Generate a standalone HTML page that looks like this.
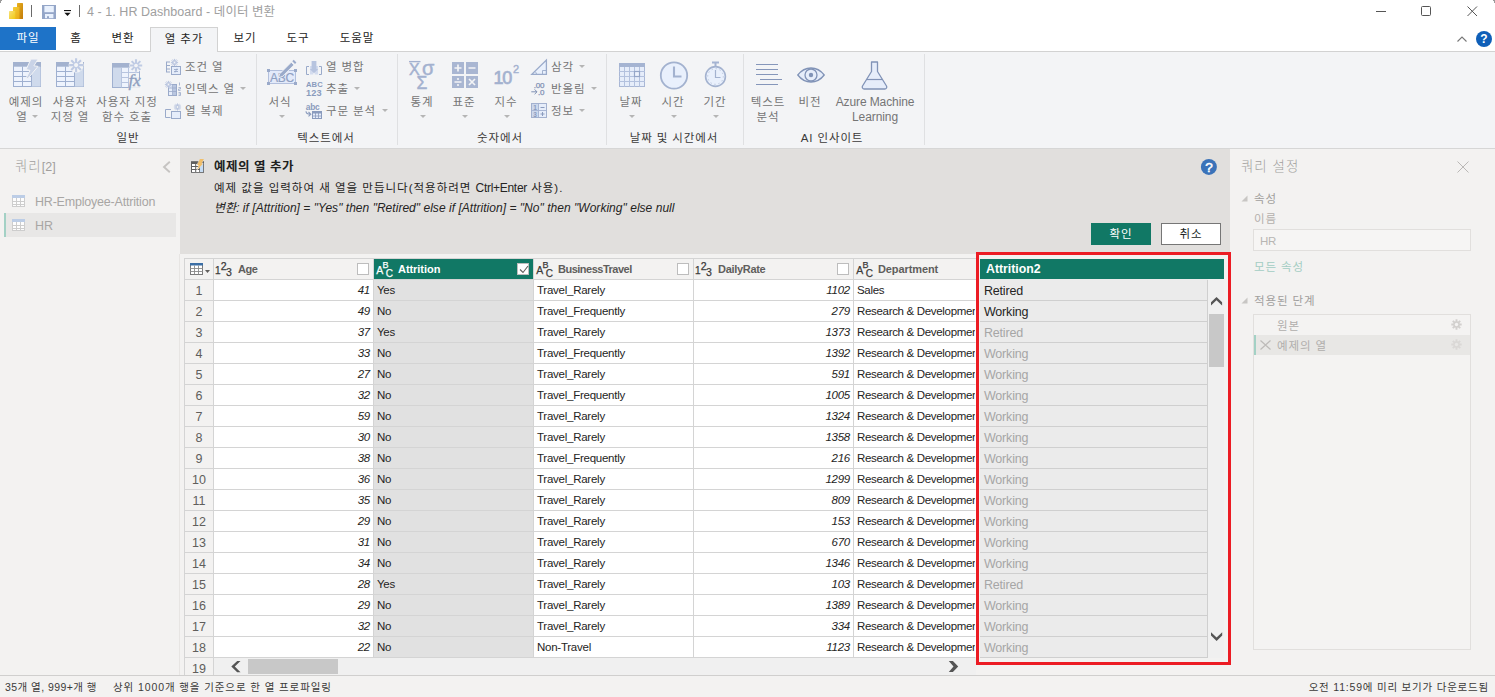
<!DOCTYPE html>
<html lang="ko"><head><meta charset="utf-8"><title>4 - 1. HR Dashboard - 데이터 변환</title>
<style>
*{box-sizing:border-box;margin:0;padding:0}
html,body{width:1495px;height:697px;overflow:hidden;background:#fff}
body{position:relative;font-family:"Liberation Sans","Noto Sans CJK KR",sans-serif;font-size:12px;color:#252423}
.a{position:absolute}
.t{position:absolute;white-space:nowrap;line-height:16px;height:16px}
.k{font-family:"Liberation Sans","Noto Sans CJK KR",sans-serif}
svg{position:absolute;overflow:visible}
/* title */
#title{left:0;top:0;width:1495px;height:27px;background:#fff}
#tabs{left:0;top:27px;width:1495px;height:25px;background:#fff;border-bottom:1px solid #d2d2d2}
.tab{position:absolute;top:0;height:24px;line-height:23px;font-size:11.5px;letter-spacing:.9px;color:#252423;text-align:center;white-space:nowrap}
#filetab{left:0;width:56px;height:23px;background:#1e73c8;color:#fff}
#acttab{left:150px;width:68px;height:25px;background:#f3f4f6;border:1px solid #d2d2d2;border-bottom:none}
#ribbon{left:0;top:52px;width:1495px;height:97px;background:#f3f4f6;border-bottom:1px solid #d6d6d6}
.sep{position:absolute;top:2px;width:1px;height:91px;background:#dfe0e2}
.rl{position:absolute;white-space:nowrap;line-height:15px;font-size:11.5px;letter-spacing:.9px;color:#757575;text-align:center}
.gl{position:absolute;white-space:nowrap;line-height:15px;font-size:11.5px;letter-spacing:.9px;color:#3b3a39;text-align:center;top:79px}
.dd{position:absolute;width:0;height:0;border-left:3px solid transparent;border-right:3px solid transparent;border-top:3px solid #b5b5b5}
/* panels */
#left{left:0;top:149px;width:180px;height:527px;background:#f3f2f1}
#center{left:180px;top:149px;width:1050px;height:105px;background:#e1dfdd}
#gridbg{left:180px;top:254px;width:1050px;height:422px;background:#f3f2f1}
#right{left:1230px;top:149px;width:265px;height:527px;background:#f3f2f1}
#status{left:0;top:675px;width:1495px;height:22px;background:#f3f2f1;border-top:1px solid #d0cfce}
/* grid */
.gr{position:absolute;left:0;height:21px;width:1495px}
.c{position:absolute;top:0;height:21px;line-height:20px;font-size:11.5px;letter-spacing:-.25px;white-space:nowrap;overflow:hidden;border-right:1px solid #d4d4d4;border-bottom:1px solid #d4d4d4;background:#fff;color:#252423;padding:0 3px}
.c.rn{left:184px;width:30px;border-left:1px solid #d4d4d4;background:#f3f2f1;text-align:center;color:#605e5c;font-size:12.5px;letter-spacing:0;padding:0;line-height:22px}
.c.c1{left:214px;width:160px}
.c.c2{left:374px;width:160px}
.c.c3{left:534px;width:160px}
.c.c4{left:694px;width:160px}
.c.c5{left:854px;width:122px;border-right:1px solid #fff;padding-right:0;letter-spacing:-.32px}
.c.c6{left:980px;width:228px;background:#ebebeb;border-right:1px solid #cfcfcf;border-bottom:1px solid #cfcfcf;font-size:12.5px;letter-spacing:-.2px;padding-left:4px;line-height:22px}
.c.sel{background:#e1e1e1}
.c.num{text-align:right;font-style:italic}
.c.dim{color:#a6a6a6}
.h{position:absolute;top:258px;height:22px;background:#f3f2f1;border:1px solid #d4d4d4;border-left:none;font-size:11px;letter-spacing:-.3px;font-weight:bold;color:#605e5c;line-height:20px;white-space:nowrap}
.cb{position:absolute;top:4px;width:12px;height:12px;background:#fff;border:1px solid #bdbdbd}
.h.hs{background:#117865;color:#fff}
.ty{position:absolute;left:3px;top:0;font-size:12px;font-weight:normal;letter-spacing:-1.6px;color:#3b3a39}
.hs .ty{color:#fff}
.ty sup{font-size:9.5px;position:relative;top:-1px;vertical-align:super;line-height:0}
.ty sub{font-size:9.5px;position:relative;top:1px;vertical-align:sub;line-height:0}
.hn{position:absolute;top:0}
.h svg{position:absolute}
.ti{left:0;top:0;fill:#3b3a39;stroke:#3b3a39;font-weight:normal;letter-spacing:0}
.hs .ti{fill:#fff;stroke:#fff}

</style></head><body>
<div id="title" class="a">
  <div class="a" style="left:0;top:0;width:1px;height:3px;background:#9a9a9a"></div><div class="a" style="left:0;top:0;width:2px;height:1px;background:#9a9a9a"></div>
  <div class="a" style="right:0;top:0;width:1px;height:3px;background:#9a9a9a"></div><div class="a" style="right:0;top:0;width:2px;height:1px;background:#9a9a9a"></div>
  <svg style="left:8px;top:2px" width="16" height="18" viewBox="0 0 16 18">
    <defs>
      <linearGradient id="pb1" x1="0" y1="0" x2="1" y2="1"><stop offset="0" stop-color="#f7e17a"/><stop offset="1" stop-color="#f2c811"/></linearGradient>
      <linearGradient id="pb2" x1="0" y1="0" x2="1" y2="1"><stop offset="0" stop-color="#f5cf3a"/><stop offset="1" stop-color="#e8a914"/></linearGradient>
      <linearGradient id="pb3" x1="0" y1="0" x2="1" y2="1"><stop offset="0" stop-color="#eab320"/><stop offset="1" stop-color="#c27a08"/></linearGradient>
    </defs>
    <rect x="9" y="1" width="6" height="16" rx=".6" fill="url(#pb3)"/>
    <rect x="5" y="5" width="6.4" height="12" rx=".6" fill="url(#pb2)"/>
    <rect x="1" y="9" width="6.2" height="8" rx=".6" fill="url(#pb1)"/>
  </svg>
  <div class="a" style="left:31px;top:5px;width:1px;height:12px;background:#6a6a6a"></div>
  <svg style="left:42px;top:5px" width="14" height="14" viewBox="0 0 14 14">
    <rect x="0" y="0" width="14" height="14" fill="#94a6c8"/>
    <rect x="2.4" y="1" width="9.4" height="6.2" fill="#e9f1fd"/>
    <rect x="3" y="9" width="8.4" height="4.2" fill="#e9f1fd"/>
    <rect x="5" y="11.2" width="2" height="2" fill="#94a6c8"/>
  </svg>
  <svg style="left:63px;top:9px" width="9" height="8" viewBox="0 0 9 8">
    <rect x="1" y="1" width="7" height="1.1" fill="#111"/>
    <path d="M1.4 3.8h6.2L4.5 7z" fill="#111"/>
  </svg>
  <div class="a" style="left:79px;top:5px;width:1px;height:12px;background:#6a6a6a"></div>
  <div class="t" id="ttl" style="left:87px;top:4px;font-size:12.5px;letter-spacing:.05px;color:#a0a0a0">4 - 1. HR Dashboard - 데이터 변환</div>
  <!-- window controls -->
  <svg style="left:1370px;top:0" width="125" height="27" viewBox="0 0 125 27">
    <path d="M6 11.5h10" stroke="#555" stroke-width="1" fill="none"/>
    <rect x="51.5" y="6.5" width="9" height="9" rx="1" stroke="#555" stroke-width="1" fill="none"/>
    <path d="M97.5 6.5l9.5 9.5M107 6.5l-9.5 9.5" stroke="#555" stroke-width="1" fill="none"/>
  </svg>
</div>
<div id="tabs" class="a">
  <div class="tab" id="filetab">파일</div>
  <div class="tab" style="left:56px;width:40px">홈</div>
  <div class="tab" style="left:100px;width:46px">변환</div>
  <div class="tab" id="acttab">열 추가</div>
  <div class="tab" style="left:222px;width:46px">보기</div>
  <div class="tab" style="left:275px;width:46px">도구</div>
  <div class="tab" style="left:332px;width:50px">도움말</div>
  <svg style="left:1456px;top:8px" width="12" height="8" viewBox="0 0 12 8"><path d="M1.5 6.5L6 2l4.5 4.5" stroke="#777" stroke-width="1.1" fill="none"/></svg>
  <svg style="left:1476px;top:4px" width="16" height="16" viewBox="0 0 16 16"><circle cx="8" cy="8" r="8" fill="#0f5fb8"/><text x="8" y="12.3" font-family="Liberation Sans,sans-serif" font-weight="bold" font-size="12" fill="#fff" text-anchor="middle">?</text></svg>
</div>
<div id="ribbon" class="a">
<!-- separators -->
<div class="sep" style="left:256px"></div><div class="sep" style="left:397px"></div><div class="sep" style="left:606px"></div><div class="sep" style="left:743px"></div><div class="sep" style="left:924px"></div>
<!-- group 1 -->
<svg style="left:13px;top:10px" width="28" height="25" viewBox="0 0 28 25">
  <rect x=".5" y=".5" width="27" height="24" fill="#eef3fd" stroke="#9fb0d0"/>
  <rect x="18.500" y="4.500" width="9" height="20" fill="#cfdaec"/>
  <rect x="0" y="0" width="28" height="4.700" fill="#a3b2cf"/>
  <path d="M9.500 4.500v20M18.500 4.500v20M.5 9.500h18M.5 14.500h18M.5 19.500h18" stroke="#9fb0d0" fill="none"/>
  <path d="M17.900-2.900h7.200l-4.200 6.700 4.100.600L14.900 16.600l-1.700-.700 3.800-7.500-3.800-.900z" fill="#c9d3e7" stroke="#f3f4f6" stroke-width="1" stroke-linejoin="round"/>
</svg>
<svg style="left:56px;top:10px" width="28" height="25" viewBox="0 0 28 25">
  <rect x=".5" y=".5" width="27" height="24" fill="#eef3fd" stroke="#9fb0d0"/>
  <rect x="18.500" y="4.500" width="9" height="20" fill="#cfdaec"/>
  <rect x="0" y="0" width="28" height="4.700" fill="#a3b2cf"/>
  <path d="M9.500 4.500v20M18.500 4.500v20M.5 9.500h18M.5 14.500h18M.5 19.500h18" stroke="#9fb0d0" fill="none"/>
  <g transform="translate(20.1,3.1)"><circle r="7.5" fill="#f3f4f6"/><path d="M-6.90 -0.00L6.90 0.00M-4.88 -4.88L4.88 4.88M-0.00 -6.90L0.00 6.90M4.88 -4.88L-4.88 4.88" stroke="#bfcbe4" stroke-width="2.1" fill="none"/><circle r="2.07" fill="#f3f4f6"/></g>
</svg>
<svg style="left:112px;top:11px" width="30" height="27" viewBox="0 0 30 27">
  <rect x=".5" y=".5" width="27" height="24" fill="#eef3fd" stroke="#9fb0d0"/>
  <rect x="1" y="4.500" width="8.500" height="19.500" fill="#cfdaec"/>
  <rect x="0" y="0" width="28" height="4.700" fill="#a3b2cf"/>
  <path d="M9.500 4.500v20M16.500 4.500v20M23.500 4.500v20M9.500 9.500h18M9.500 14.500h18M9.500 19.500h18" stroke="#b7c4df" fill="none"/>
  <rect x="17" y="10" width="13" height="17" fill="#f3f4f6" opacity=".85"/>
  <path d="M27.500 9v6" stroke="#9fb0d0"/>
  <g transform="translate(24.0,2.5)"><circle r="6.8" fill="#f3f4f6"/><path d="M-6.20 -0.00L6.20 0.00M-4.38 -4.38L4.38 4.38M-0.00 -6.20L0.00 6.20M4.38 -4.38L-4.38 4.38" stroke="#bfcbe4" stroke-width="2.1" fill="none"/><circle r="1.86" fill="#f3f4f6"/></g>
  <text x="16.500" y="23.300" font-family="Liberation Serif,serif" font-style="italic" font-size="17.500" fill="#8e9fc0" stroke="#8e9fc0" stroke-width=".35" letter-spacing="-.3">fx</text>
</svg>
<div class="rl" style="left:0;width:52px;top:43px">예제의</div>
<div class="rl" style="left:0;width:44px;top:58px">열</div><div class="dd" style="left:31.5px;top:63px"></div>
<div class="rl" style="left:44px;width:52px;top:43px">사용자</div>
<div class="rl" style="left:44px;width:52px;top:58px">지정 열</div>
<div class="rl" style="left:92px;width:70px;top:43px">사용자 지정</div>
<div class="rl" style="left:92px;width:70px;top:58px">함수 호출</div>
<!-- small: 조건 열 -->
<svg style="left:166px;top:7px" width="16" height="16" viewBox="0 0 16 16">
  <path d="M.5 2.5v11M1 3h3M1 6.5h3M1 10h3M1 13h3" stroke="#9aaaca" fill="none"/>
  <rect x="5.5" y="7.5" width="9" height="8" fill="#e6edfa" stroke="#9aaaca"/>
  <path d="M8 10.5h4M8 12.5h4M11 9.5l-2 4" stroke="#9aaaca" stroke-width=".9" fill="none"/>
  <g transform="translate(8.5,3.5)"><path d="M-3.60 -0.00L3.60 0.00M-3.12 -1.80L3.12 1.80M-1.80 -3.12L1.80 3.12M-0.00 -3.60L0.00 3.60M1.80 -3.12L-1.80 3.12M3.12 -1.80L-3.12 1.80" stroke="#b5c2de" stroke-width="0.9" fill="none"/><circle r="0.90" fill="#f3f4f6"/></g>
</svg>
<div class="rl" style="left:185px;top:8px">조건 열</div>
<!-- 인덱스 열 -->
<svg style="left:165px;top:29px" width="17" height="16" viewBox="0 0 17 16">
  <rect x="3.5" y="3.5" width="8" height="11" fill="#e6edfa" stroke="#9aaaca"/>
  <rect x="8" y="4" width="3" height="10" fill="#b9c6e0"/>
  <path d="M3.5 7h8M3.5 10.5h8M7.5 4v10" stroke="#9aaaca" stroke-width=".8" fill="none"/>
  <g transform="translate(3.5,3.5)"><path d="M-3.60 -0.00L3.60 0.00M-3.12 -1.80L3.12 1.80M-1.80 -3.12L1.80 3.12M-0.00 -3.60L0.00 3.60M1.80 -3.12L-1.80 3.12M3.12 -1.80L-3.12 1.80" stroke="#b5c2de" stroke-width="0.9" fill="none"/><circle r="0.90" fill="#f3f4f6"/></g>
  <path d="M14.5 1.5v3M13.5 6.5h2v1.5h-2v1.5h2M13.5 11.5h2v3h-2M13.5 13h2" stroke="#9aaaca" stroke-width=".8" fill="none"/>
</svg>
<div class="rl" style="left:185px;top:30px">인덱스 열</div><div class="dd" style="left:240px;top:35px"></div>
<!-- 열 복제 -->
<svg style="left:165px;top:51px" width="17" height="16" viewBox="0 0 17 16">
  <path d="M6 6.5H.5v8h5" stroke="#9aaaca" fill="none"/>
  <rect x="6.5" y="8.500" width="9" height="7" fill="#e6edfa" stroke="#9aaaca"/>
  <g transform="translate(12.5,4.0)"><path d="M-3.60 -0.00L3.60 0.00M-3.12 -1.80L3.12 1.80M-1.80 -3.12L1.80 3.12M-0.00 -3.60L0.00 3.60M1.80 -3.12L-1.80 3.12M3.12 -1.80L-3.12 1.80" stroke="#b5c2de" stroke-width="0.9" fill="none"/><circle r="0.90" fill="#f3f4f6"/></g>
</svg>
<div class="rl" style="left:185px;top:52px">열 복제</div>
<div class="gl" style="left:98px;width:60px">일반</div>
<!-- group 2 -->
<svg style="left:265px;top:7px" width="33" height="27" viewBox="0 0 33 27">
  <rect x="3.500" y="11.500" width="27" height="13" fill="#e3eafa" stroke="#b3c0dd"/>
  <g fill="#9aaaca"><rect x="2" y="10" width="3" height="3"/><rect x="29" y="10" width="3" height="3"/><rect x="2" y="23" width="3" height="3"/><rect x="29" y="23" width="3" height="3"/></g>
  <text x="17" y="22.500" font-family="Liberation Sans,sans-serif" font-size="12" fill="#8fa0c2" stroke="#8fa0c2" stroke-width=".2" text-anchor="middle" letter-spacing="-.2">ABC</text>
  <path d="M26.300 3.200l2.700 2.700L17.300 17.600l-3.900 1.200 1.200-3.900z" fill="#9aaaca" stroke="#f3f4f6" stroke-width=".9"/>
  <path d="M27.300 2.200l1.400-1.400 2.700 2.700-1.400 1.400z" fill="#9aaaca"/>
</svg>
<div class="rl" style="left:255px;width:50px;top:43px">서식</div><div class="dd" style="left:278.5px;top:63px"></div>
<svg style="left:306px;top:8px" width="16" height="16" viewBox="0 0 16 16">
  <rect x="4" y="6" width="3.300" height="8.500" fill="#d3dcef"/><rect x="8.700" y="6" width="3.300" height="8.500" fill="#d3dcef"/>
  <path d="M3 6.500H.5v8H3M13 6.500h2.500v8H13" stroke="#9aaaca" fill="none"/>
  <path d="M5.600 1h4.800v8h1.800L8 13.200 3.800 9h1.800z" fill="#b7c4df"/>
</svg>
<div class="rl" style="left:326px;top:8px">열 병합</div>
<svg style="left:305px;top:26px" width="18" height="18" viewBox="0 0 18 18">
  <g font-family="Liberation Sans,sans-serif" font-weight="bold" fill="#8a9bbd">
  <text x="1" y="8.700" font-size="7.600" letter-spacing=".1">ABC</text>
  <text x="1" y="17.700" font-size="9.200" letter-spacing=".1">123</text></g>
</svg>
<div class="rl" style="left:326px;top:30px">추출</div><div class="dd" style="left:354px;top:35px"></div>
<svg style="left:305px;top:50px" width="18" height="17" viewBox="0 0 18 17">
  <text x="0.700" y="7.700" font-family="Liberation Sans,sans-serif" font-weight="bold" font-size="8.400" fill="#8a9bbd" letter-spacing="-.2">abc</text>
  <rect x="7.500" y="9.500" width="9" height="7" fill="#e6edfa" stroke="#8a9bbd"/>
  <rect x="7" y="9" width="10" height="2.500" fill="#8a9bbd"/>
  <path d="M10.500 11v5.500M13.500 11v5.500M7.500 14h9" stroke="#8a9bbd" stroke-width=".8" fill="none"/>
  <path d="M1 9.200c0 2.300 1 3 4.500 3M3.500 10l2.300 2.200-2.300 2.200" stroke="#8a9bbd" stroke-width="1.100" fill="none"/>
</svg>
<div class="rl" style="left:326px;top:52px">구문 분석</div><div class="dd" style="left:382px;top:57px"></div>
<div class="gl" style="left:286px;width:80px">텍스트에서</div>
<!-- group 3 -->
<svg style="left:408px;top:8px" width="29" height="30" viewBox="0 0 29 30">
  <g font-family="Liberation Sans,sans-serif" fill="#a3b1cf" stroke="#a3b1cf" stroke-width=".45">
  <path d="M1 1.600h11.500" stroke-width="1.300" fill="none"/>
  <text x="1" y="14.600" font-size="16">X</text>
  <text x="14" y="14.600" font-size="20">σ</text>
  <text x="8.500" y="29" font-size="17.500">Σ</text></g>
</svg>
<div class="rl" style="left:397px;width:50px;top:43px">통계</div><div class="dd" style="left:419.5px;top:63px"></div>
<svg style="left:452px;top:10px" width="26" height="26" viewBox="0 0 26 26">
  <g fill="#a9b6d2"><rect x="0" y="0" width="12" height="12"/><rect x="14" y="0" width="12" height="12"/><rect x="0" y="14" width="12" height="12"/><rect x="14" y="14" width="12" height="12"/></g>
  <path d="M2.500 6h7M6 2.500v7M16.500 6h7M2.500 20h7M17 17l6 6M23 17l-6 6" stroke="#f3f4f6" stroke-width="1.700" fill="none"/>
  <circle cx="6" cy="17" r="1.100" fill="#f3f4f6"/><circle cx="6" cy="23" r="1.100" fill="#f3f4f6"/>
</svg>
<div class="rl" style="left:439px;width:50px;top:43px">표준</div><div class="dd" style="left:461.5px;top:63px"></div>
<svg style="left:494px;top:11px" width="28" height="24" viewBox="0 0 28 24">
  <g font-family="Liberation Sans,sans-serif" fill="#a3b1cf" stroke="#a3b1cf" stroke-width=".7">
  <text x="-.5" y="21" font-size="18" letter-spacing="-1.200">10</text>
  <text x="19" y="10" font-size="11" stroke-width=".4">2</text></g>
</svg>
<div class="rl" style="left:481px;width:50px;top:43px">지수</div><div class="dd" style="left:503.5px;top:63px"></div>
<svg style="left:531px;top:7px" width="16" height="16" viewBox="0 0 16 16">
  <path d="M.8 15.400h14.600V1z" fill="#e9f0fc" stroke="#9aaaca" stroke-width="1.300"/>
  <path d="M11.500 15.500v-4h4M5.500 15.500a4 4 0 0 0-1.200-2.800" stroke="#9aaaca" stroke-width=".9" fill="none"/>
</svg>
<div class="rl" style="left:551px;top:8px">삼각</div><div class="dd" style="left:579px;top:13px"></div>
<svg style="left:531px;top:29px" width="16" height="15" viewBox="0 0 16 15">
  <g font-family="Liberation Sans,sans-serif" fill="#7f90b4" stroke="#7f90b4" stroke-width=".25">
  <text x="2.800" y="6.600" font-size="8" letter-spacing="-.2">.00</text>
  <text x="7" y="13.800" font-size="8" letter-spacing="-.2">.0</text></g>
  <path d="M0.300 10.800h5.700M3.600 8.400L6 10.800l-2.400 2.400" stroke="#7f90b4" stroke-width="1" fill="none"/>
</svg>
<div class="rl" style="left:551px;top:30px">반올림</div><div class="dd" style="left:591px;top:35px"></div>
<svg style="left:531px;top:51px" width="16" height="15" viewBox="0 0 16 15">
  <rect x=".5" y=".5" width="15" height="14" fill="#e6edfa" stroke="#a3b1cf"/>
  <rect x="1" y="1" width="6.500" height="13" fill="#cdd8ec"/>
  <path d="M7.500 1v13M1 7.500h14" stroke="#a9b7d5" stroke-width="1" fill="none"/>
  <path d="M9.500 4.500h4M9.500 11h4M11.500 9v4" stroke="#8a9bbd" stroke-width="1" fill="none"/>
  <g font-family="Liberation Sans,sans-serif" font-weight="bold" fill="#8a9bbd"><text x="2.200" y="6.700" font-size="6.500">1</text><text x="2.200" y="13.600" font-size="6.500">3</text></g>
</svg>
<div class="rl" style="left:551px;top:52px">정보</div><div class="dd" style="left:579px;top:57px"></div>
<div class="gl" style="left:460px;width:80px">숫자에서</div>
<!-- group 4 -->
<svg style="left:619px;top:11px" width="26" height="24" viewBox="0 0 26 24">
  <rect x=".5" y=".5" width="25" height="23" fill="#e6edfa" stroke="#a9b7d5"/>
  <rect x="0" y="0" width="26" height="4" fill="#a5b4d2"/>
  <path d="M5.500 4v20M10.500 4v20M15.500 4v20M20.500 4v20M0 8.500h26M0 13.500h26M0 18.500h26" stroke="#b3c1de" fill="none"/>
  <rect x="15.500" y="8.500" width="5" height="5" fill="#eef3fd" stroke="#95a6c8" stroke-width="1.200"/>
</svg>
<div class="rl" style="left:606px;width:50px;top:43px">날짜</div><div class="dd" style="left:628.5px;top:63px"></div>
<svg style="left:660px;top:9px" width="28" height="29" viewBox="0 0 28 29">
  <circle cx="14" cy="14.500" r="13.200" fill="#e9f0fc" stroke="#a3b2cf" stroke-width="1.800"/>
  <path d="M14 5.500v10h7.500" stroke="#a3b2cf" stroke-width="2.100" fill="none"/>
</svg>
<div class="rl" style="left:648px;width:50px;top:43px">시간</div><div class="dd" style="left:670.5px;top:63px"></div>
<svg style="left:704px;top:9px" width="23" height="27" viewBox="0 0 23 27">
  <rect x="8" y="0.500" width="7" height="2" fill="#a5b4d2"/><rect x="10.500" y="2" width="2" height="3" fill="#a5b4d2"/>
  <circle cx="11.500" cy="15.500" r="9.900" fill="#e9f0fc" stroke="#a3b2cf" stroke-width="1.600"/>
  <circle cx="11.500" cy="15.500" r="7.800" fill="none" stroke="#a3b2cf" stroke-width="1" stroke-dasharray=".9 3.184"/>
  <path d="M11.500 9v7.500h5" stroke="#a3b2cf" stroke-width="1.200" fill="none"/>
</svg>
<div class="rl" style="left:690px;width:50px;top:43px">기간</div><div class="dd" style="left:712.5px;top:63px"></div>
<div class="gl" style="left:614px;width:120px">날짜 및 시간에서</div>
<!-- group 5 -->
<svg style="left:756px;top:10px" width="27" height="23" viewBox="0 0 27 23">
  <path d="M0 2.500h22M0 7.500h22M0 12.500h22M4 17.500h22M0 22.500h22" stroke="#8596ba" stroke-width="1" fill="none"/>
</svg>
<div class="rl" style="left:738px;width:60px;top:43px">텍스트</div>
<div class="rl" style="left:738px;width:60px;top:58px">분석</div>
<svg style="left:797px;top:15px" width="28" height="16" viewBox="0 0 28 16">
  <path d="M.8 8C5 2.500 9.500 1 14 1s9 1.500 13.200 7C23 13.500 18.500 15 14 15S5 13.500.8 8z" fill="#e6edfa" stroke="#8193b7" stroke-width="1.300"/>
  <circle cx="14" cy="8" r="6" fill="#e6edfa" stroke="#8193b7" stroke-width="1.300"/>
  <circle cx="14" cy="8" r="2.200" fill="#8193b7"/>
</svg>
<div class="rl" style="left:785px;width:50px;top:43px">비전</div>
<svg style="left:861px;top:9px" width="27" height="29" viewBox="0 0 27 29">
  <path d="M10.500 1h6v9.500l9 14.500a2 2 0 0 1-1.700 3H3.200A2 2 0 0 1 1.500 25l9-14.500z" fill="#e6edfa" stroke="#8193b7" stroke-width="1.300" stroke-linejoin="round"/>
  <path d="M5.500 18.500h16" stroke="#8193b7" stroke-width="1.200"/>
</svg>
<div class="rl" style="left:825px;width:100px;top:43px;font-size:12px;letter-spacing:-.1px">Azure Machine</div>
<div class="rl" style="left:825px;width:100px;top:58px;font-size:12px;letter-spacing:-.1px">Learning</div>
<div class="gl" style="left:782px;width:100px">AI 인사이트</div>

</div>

<div id="left" class="a"></div>
<div id="center" class="a"></div>
<div id="gridbg" class="a"></div>
<div class="a" style="left:179px;top:254px;width:1px;height:421px;background:#e7e5e3"></div>
<div id="right" class="a"></div>
<!-- left panel content -->
<div class="t" style="left:15px;top:158px;font-size:13.400px;letter-spacing:1.050px;font-weight:300;color:#a19f9d;line-height:18px;height:18px">쿼리<span style="font-size:12.500px;letter-spacing:0">[2]</span></div>
<svg style="left:162px;top:161px" width="9" height="12" viewBox="0 0 9 12"><path d="M7.800 .8L2 6l5.800 5.200" stroke="#c6c4c2" stroke-width="1.900" fill="none"/></svg>
<div class="a" style="left:4px;top:213px;width:172px;height:24px;background:#e8e7e6"></div>
<div class="a" style="left:4px;top:213px;width:2px;height:24px;background:#a3d1c5"></div>
<svg style="left:12px;top:195px" width="14" height="12" viewBox="0 0 14 12"><rect x=".5" y=".5" width="12" height="11" fill="#fdfdfd" stroke="#cdcdcd"/><rect x="0" y="0" width="13" height="3" fill="#bccde6"/><path d="M4.500 3v9M8.500 3v9M0 6.500h13M0 9.500h13" stroke="#cdcdcd" stroke-width="1" fill="none"/></svg>
<div class="t" style="left:35px;top:194px;font-size:12.500px;letter-spacing:-.2px;color:#a8a6a4">HR-Employee-Attrition</div>
<svg style="left:12px;top:219px" width="14" height="12" viewBox="0 0 14 12"><rect x=".5" y=".5" width="12" height="11" fill="#fdfdfd" stroke="#cdcdcd"/><rect x="0" y="0" width="13" height="3" fill="#bccde6"/><path d="M4.500 3v9M8.500 3v9M0 6.500h13M0 9.500h13" stroke="#cdcdcd" stroke-width="1" fill="none"/></svg>
<div class="t" style="left:35px;top:218px;font-size:12.500px;color:#a8a6a4">HR</div>
<!-- center header -->
<svg style="left:190px;top:159px" width="15" height="15" viewBox="0 0 15 15">
  <rect x="1" y="2.200" width="13" height="11.600" fill="#5f5f5f"/>
  <g fill="#fff"><rect x="2" y="5" width="3.200" height="2"/><rect x="2" y="8" width="3.200" height="2"/><rect x="2" y="11" width="3.200" height="2"/><rect x="6.200" y="5" width="3" height="2"/><rect x="6.200" y="8" width="3" height="2"/><rect x="6.200" y="11" width="3" height="2"/></g>
  <rect x="10" y="4" width="3.200" height="9" fill="#c6dcf3"/>
  <path d="M9.900 0h4l-2.300 4.400 1.300.400L7 10.900l1.800-4.500-1.600-.700z" fill="#f1bf6b" stroke="#e1dfdd" stroke-width=".8" paint-order="stroke"/>
</svg>
<div class="t" style="left:214px;top:159px;font-size:12.500px;letter-spacing:.5px;font-weight:bold;color:#201f1e" id="hdt">예제의 열 추가</div>
<div class="t" style="left:214px;top:180px;font-size:11.500px;letter-spacing:1px;color:#252423" id="desc">예제 값을 입력하여 새 열을 만듭니다(적용하려면 <span style="letter-spacing:-.3px;font-size:12px">Ctrl+Enter</span> 사용).</div>
<div class="t" style="left:214px;top:200px;font-size:12px;letter-spacing:.03px;font-style:italic;color:#252423" id="formula">변환: if [Attrition] = "Yes" then "Retired" else if [Attrition] = "No" then "Working" else null</div>
<svg style="left:1200px;top:158px" width="18" height="18" viewBox="0 0 18 18"><circle cx="8.900" cy="8.900" r="8" fill="#3b73b9"/><text x="8.900" y="13.700" font-family="Liberation Sans,sans-serif" font-size="13.500" fill="#fff" stroke="#fff" stroke-width=".5" text-anchor="middle">?</text></svg>
<div class="a" style="left:1091px;top:223px;width:60px;height:22px;background:#117865;color:#fff;font-size:11.500px;letter-spacing:.9px;line-height:23px;text-align:center">확인</div>
<div class="a" style="left:1161px;top:223px;width:60px;height:22px;background:#fff;border:1px solid #767676;color:#201f1e;font-size:11.500px;letter-spacing:.9px;line-height:21px;text-align:center">취소</div>
<!-- grid headers -->
<div class="h" style="left:184px;width:30px;border-left:1px solid #d4d4d4"></div>
<svg style="left:190px;top:263px" width="21" height="12" viewBox="0 0 21 12"><rect x=".5" y=".5" width="12" height="11" fill="#fff" stroke="#7a7a7a"/><rect x="0" y="0" width="13" height="2.500" fill="#3b6ea5"/><path d="M4.500 2.500v9M8.500 2.500v9M0 5.500h13M0 8.500h13" stroke="#8a8a8a" stroke-width=".9" fill="none"/><path d="M15 7h5l-2.500 3z" fill="#605e5c"/></svg>
<div class="h" style="left:214px;width:160px"><svg class="ti" width="22" height="20" viewBox="0 0 22 20"><g font-family="Liberation Sans,sans-serif" stroke-width=".25"><text x="1.100" y="14.700" font-size="10">1</text><text x="6.700" y="10.700" font-size="10.500">2</text><text x="11.900" y="17.100" font-size="10.500">3</text></g></svg><span class="hn" style="left:24px;letter-spacing:-.5px">Age</span><i class="cb" style="left:143px"></i></div>
<div class="h hs" style="left:374px;width:160px"><svg class="ti" width="22" height="20" viewBox="0 0 22 20"><g font-family="Liberation Sans,sans-serif" stroke-width=".25"><text x="2.200" y="14.700" font-size="10.500">A</text><text x="8.400" y="9.100" font-size="9">B</text><text x="11.800" y="17.700" font-size="10">C</text></g></svg><span class="hn" style="left:24px;letter-spacing:-.05px">Attrition</span><i class="cb" style="left:143px"></i><svg style="left:145px;top:6px" width="10" height="9" viewBox="0 0 10 9"><path d="M1 4.500l3 3L9 1" stroke="#605e5c" stroke-width="1.100" fill="none"/></svg></div>
<div class="h" style="left:534px;width:160px"><svg class="ti" width="22" height="20" viewBox="0 0 22 20"><g font-family="Liberation Sans,sans-serif" stroke-width=".25"><text x="2.200" y="14.700" font-size="10.500">A</text><text x="8.400" y="9.100" font-size="9">B</text><text x="11.800" y="17.700" font-size="10">C</text></g></svg><span class="hn" style="left:24px;letter-spacing:-.5px">BusinessTravel</span><i class="cb" style="left:143px"></i></div>
<div class="h" style="left:694px;width:160px"><svg class="ti" width="22" height="20" viewBox="0 0 22 20"><g font-family="Liberation Sans,sans-serif" stroke-width=".25"><text x="1.100" y="14.700" font-size="10">1</text><text x="6.700" y="10.700" font-size="10.500">2</text><text x="11.900" y="17.100" font-size="10.500">3</text></g></svg><span class="hn" style="left:24px;letter-spacing:-.3px">DailyRate</span><i class="cb" style="left:143px"></i></div>
<div class="h" style="left:854px;width:122px;border-right:none"><svg class="ti" width="22" height="20" viewBox="0 0 22 20"><g font-family="Liberation Sans,sans-serif" stroke-width=".25"><text x="2.200" y="14.700" font-size="10.500">A</text><text x="8.400" y="9.100" font-size="9">B</text><text x="11.800" y="17.700" font-size="10">C</text></g></svg><span class="hn" style="left:24px;letter-spacing:-.1px">Department</span></div>
<div class="a" style="left:980px;top:279px;width:228px;height:2px;background:#ebebeb"></div>
<div class="a" style="left:980px;top:259px;width:244px;height:20px;background:#117865;color:#fff;font-weight:bold;font-size:12.300px;line-height:21px;padding-left:6px;white-space:nowrap">Attrition2</div>
<div class="gr" style="top:280px"><div class="c rn">1</div><div class="c c1 num">41</div><div class="c c2 sel">Yes</div><div class="c c3">Travel_Rarely</div><div class="c c4 num">1102</div><div class="c c5">Sales</div><div class="c c6">Retired</div></div>
<div class="gr" style="top:301px"><div class="c rn">2</div><div class="c c1 num">49</div><div class="c c2 sel">No</div><div class="c c3">Travel_Frequently</div><div class="c c4 num">279</div><div class="c c5">Research & Development</div><div class="c c6">Working</div></div>
<div class="gr" style="top:322px"><div class="c rn">3</div><div class="c c1 num">37</div><div class="c c2 sel">Yes</div><div class="c c3">Travel_Rarely</div><div class="c c4 num">1373</div><div class="c c5">Research & Development</div><div class="c c6 dim">Retired</div></div>
<div class="gr" style="top:343px"><div class="c rn">4</div><div class="c c1 num">33</div><div class="c c2 sel">No</div><div class="c c3">Travel_Frequently</div><div class="c c4 num">1392</div><div class="c c5">Research & Development</div><div class="c c6 dim">Working</div></div>
<div class="gr" style="top:364px"><div class="c rn">5</div><div class="c c1 num">27</div><div class="c c2 sel">No</div><div class="c c3">Travel_Rarely</div><div class="c c4 num">591</div><div class="c c5">Research & Development</div><div class="c c6 dim">Working</div></div>
<div class="gr" style="top:385px"><div class="c rn">6</div><div class="c c1 num">32</div><div class="c c2 sel">No</div><div class="c c3">Travel_Frequently</div><div class="c c4 num">1005</div><div class="c c5">Research & Development</div><div class="c c6 dim">Working</div></div>
<div class="gr" style="top:406px"><div class="c rn">7</div><div class="c c1 num">59</div><div class="c c2 sel">No</div><div class="c c3">Travel_Rarely</div><div class="c c4 num">1324</div><div class="c c5">Research & Development</div><div class="c c6 dim">Working</div></div>
<div class="gr" style="top:427px"><div class="c rn">8</div><div class="c c1 num">30</div><div class="c c2 sel">No</div><div class="c c3">Travel_Rarely</div><div class="c c4 num">1358</div><div class="c c5">Research & Development</div><div class="c c6 dim">Working</div></div>
<div class="gr" style="top:448px"><div class="c rn">9</div><div class="c c1 num">38</div><div class="c c2 sel">No</div><div class="c c3">Travel_Frequently</div><div class="c c4 num">216</div><div class="c c5">Research & Development</div><div class="c c6 dim">Working</div></div>
<div class="gr" style="top:469px"><div class="c rn">10</div><div class="c c1 num">36</div><div class="c c2 sel">No</div><div class="c c3">Travel_Rarely</div><div class="c c4 num">1299</div><div class="c c5">Research & Development</div><div class="c c6 dim">Working</div></div>
<div class="gr" style="top:490px"><div class="c rn">11</div><div class="c c1 num">35</div><div class="c c2 sel">No</div><div class="c c3">Travel_Rarely</div><div class="c c4 num">809</div><div class="c c5">Research & Development</div><div class="c c6 dim">Working</div></div>
<div class="gr" style="top:511px"><div class="c rn">12</div><div class="c c1 num">29</div><div class="c c2 sel">No</div><div class="c c3">Travel_Rarely</div><div class="c c4 num">153</div><div class="c c5">Research & Development</div><div class="c c6 dim">Working</div></div>
<div class="gr" style="top:532px"><div class="c rn">13</div><div class="c c1 num">31</div><div class="c c2 sel">No</div><div class="c c3">Travel_Rarely</div><div class="c c4 num">670</div><div class="c c5">Research & Development</div><div class="c c6 dim">Working</div></div>
<div class="gr" style="top:553px"><div class="c rn">14</div><div class="c c1 num">34</div><div class="c c2 sel">No</div><div class="c c3">Travel_Rarely</div><div class="c c4 num">1346</div><div class="c c5">Research & Development</div><div class="c c6 dim">Working</div></div>
<div class="gr" style="top:574px"><div class="c rn">15</div><div class="c c1 num">28</div><div class="c c2 sel">Yes</div><div class="c c3">Travel_Rarely</div><div class="c c4 num">103</div><div class="c c5">Research & Development</div><div class="c c6 dim">Retired</div></div>
<div class="gr" style="top:595px"><div class="c rn">16</div><div class="c c1 num">29</div><div class="c c2 sel">No</div><div class="c c3">Travel_Rarely</div><div class="c c4 num">1389</div><div class="c c5">Research & Development</div><div class="c c6 dim">Working</div></div>
<div class="gr" style="top:616px"><div class="c rn">17</div><div class="c c1 num">32</div><div class="c c2 sel">No</div><div class="c c3">Travel_Rarely</div><div class="c c4 num">334</div><div class="c c5">Research & Development</div><div class="c c6 dim">Working</div></div>
<div class="gr" style="top:637px"><div class="c rn">18</div><div class="c c1 num">22</div><div class="c c2 sel">No</div><div class="c c3">Non-Travel</div><div class="c c4 num">1123</div><div class="c c5">Research & Development</div><div class="c c6 dim">Working</div></div>
<div class="gr" style="top:658px"><div class="c rn" style="height:18px;border-bottom:none">19</div></div>
<!-- horizontal scroll -->
<div class="a" style="left:214px;top:658px;width:762px;height:17px;background:#f0f0f0"></div>
<div class="a" style="left:248px;top:659px;width:90px;height:15px;background:#c8c8c8"></div>
<!-- vertical scroll (Attrition2) -->
<div class="a" style="left:1208px;top:279px;width:16px;height:379px;background:#f0f0f0"></div>
<div class="a" style="left:1209px;top:314px;width:15px;height:53px;background:#c8c8c8"></div>
<svg style="left:0;top:0" width="1495" height="697" viewBox="0 0 1495 697">
  <g fill="#555">
  <path d="M237.200 661h3.300l-5.700 5.600 5.700 5.600h-3.300l-5.900-5.600z"/>
  <path d="M948.800 661h4.100l5.300 5.400-5.300 5.600h-4.100l4.700-5.600z"/>
  <path d="M1211 302.200l5.500-5.300 5.600 5.300v3.200l-5.600-5.200-5.500 5.200z"/>
  <path d="M1211 632.200l5.600 5.300 5.600-5.300v3.300l-5.600 5.400-5.600-5.400z"/>
  </g>
</svg>
<!-- red box -->
<div class="a" style="left:976px;top:252px;width:255px;height:413px;border:3px solid #ec1c24"></div>
<!-- right panel -->
<div class="t" style="left:1241px;top:158px;font-size:13.400px;letter-spacing:1.050px;font-weight:300;color:#a19f9d;line-height:18px;height:18px">쿼리 설정</div>
<svg style="left:1457px;top:161px" width="12" height="12" viewBox="0 0 12 12"><path d="M.5.5l11 11M11.500.5l-11 11" stroke="#bab8b6" stroke-width="1" fill="none"/></svg>
<svg style="left:1241px;top:195px" width="7" height="7" viewBox="0 0 7 7"><path d="M6.500.5v6h-6z" fill="#c8c6c4"/></svg>
<div class="t" style="left:1254px;top:191px;font-size:11.500px;letter-spacing:.9px;color:#a19f9d">속성</div>
<div class="t" style="left:1254px;top:211px;font-size:11.500px;letter-spacing:.9px;color:#b3b0ad">이름</div>
<div class="a" style="left:1253px;top:229px;width:218px;height:22px;border:1px solid #e1dfdd;background:#f6f5f4"></div>
<div class="t" style="left:1260px;top:233px;font-size:11.500px;letter-spacing:-.3px;color:#b8b6b3">HR</div>
<div class="t" style="left:1254px;top:259px;font-size:11.500px;letter-spacing:.9px;color:#a3cdc3">모든 속성</div>
<svg style="left:1241px;top:297px" width="7" height="7" viewBox="0 0 7 7"><path d="M6.500.5v6h-6z" fill="#c8c6c4"/></svg>
<div class="t" style="left:1254px;top:293px;font-size:11.500px;letter-spacing:.9px;color:#a19f9d">적용된 단계</div>
<div class="a" style="left:1253px;top:314px;width:218px;height:336px;border:1px solid #e1dfdd;background:#f4f3f2"></div>
<div class="a" style="left:1254px;top:335px;width:216px;height:20px;background:#e8e7e5"></div>
<div class="a" style="left:1254px;top:335px;width:2px;height:20px;background:#a3d1c5"></div>
<div class="t" style="left:1277px;top:318px;font-size:11.500px;letter-spacing:.9px;color:#b0aeac">원본</div>
<div class="t" style="left:1277px;top:338px;font-size:11.500px;letter-spacing:.9px;color:#b0aeac">예제의 열</div>
<svg style="left:1260px;top:340px" width="11" height="10" viewBox="0 0 11 10"><path d="M.5.5l10 9M10.500.5l-10 9" stroke="#bdbbb9" stroke-width="1.200" fill="none"/></svg>
<svg style="left:1451px;top:319px" width="11" height="11" viewBox="0 0 11 11"><g transform="translate(5.500,5.500)" stroke="#d2d0ce" stroke-width="1.900"><path d="M0-5.200v10.400M-5.200 0h10.400M-3.700-3.700l7.400 7.400M-3.700 3.700l7.400-7.400"/></g><circle cx="5.500" cy="5.500" r="3.200" fill="#d2d0ce"/><circle cx="5.500" cy="5.500" r="1.700" fill="#f4f3f2"/></svg>
<svg style="left:1451px;top:339px" width="11" height="11" viewBox="0 0 11 11"><g transform="translate(5.500,5.500)" stroke="#dad8d6" stroke-width="1.900"><path d="M0-5.200v10.400M-5.200 0h10.400M-3.700-3.700l7.400 7.400M-3.700 3.700l7.400-7.400"/></g><circle cx="5.500" cy="5.500" r="3.200" fill="#dad8d6"/><circle cx="5.500" cy="5.500" r="1.700" fill="#e8e7e5"/></svg>
<!-- status -->
<div id="status" class="a"></div>
<div class="t" style="left:5px;top:679px;font-size:10.500px;letter-spacing:.45px;color:#3b3a39" id="st1">35개 열, 999+개 행</div>
<div class="t" style="left:113px;top:679px;font-size:10.500px;letter-spacing:.9px;color:#3b3a39" id="st2">상위 1000개 행을 기준으로 한 열 프로파일링</div>
<div class="t" style="right:6px;top:679px;font-size:10.500px;letter-spacing:.8px;color:#3b3a39" id="st3">오전 11:59에 미리 보기가 다운로드됨</div>

</body></html>
